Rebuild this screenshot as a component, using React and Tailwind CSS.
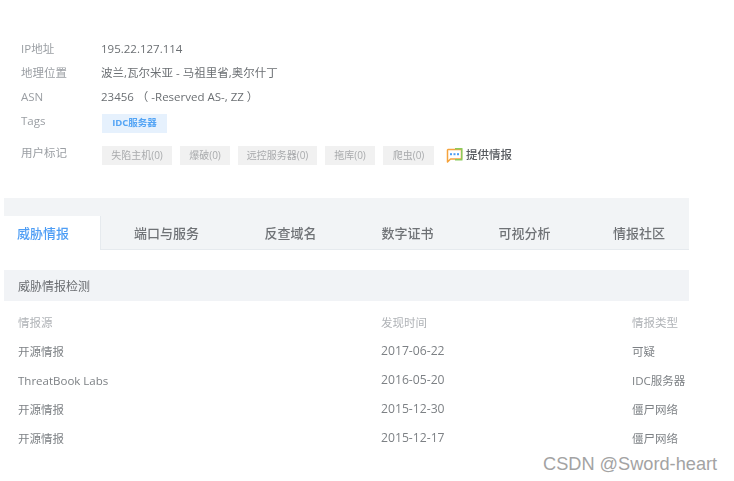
import React from 'react'

const FONT = "font-['Open_Sans','Noto_Sans_CJK_SC',sans-serif]"

const userTags = [
  { label: '失陷主机(0)', width: 'w-[70px]' },
  { label: '爆破(0)', width: 'w-[50px]' },
  { label: '远控服务器(0)', width: 'w-[79px]' },
  { label: '拖库(0)', width: 'w-[50px]' },
  { label: '爬虫(0)', width: 'w-[51px]' },
]

const tabs = [
  { label: '端口与服务', width: 'w-[131px] justify-center' },
  { label: '反查域名', width: 'w-[117px] justify-center' },
  { label: '数字证书', width: 'w-[117px] justify-center' },
  { label: '可视分析', width: 'w-[117px] justify-center' },
  { label: '情报社区', width: 'w-[105px] justify-end pr-[23px]' },
]

const rows = [
  ['开源情报', '2017-06-22', '可疑'],
  ['ThreatBook Labs', '2016-05-20', 'IDC服务器'],
  ['开源情报', '2015-12-30', '僵尸网络'],
  ['开源情报', '2015-12-17', '僵尸网络'],
]

function InfoRow({ label, children, className }) {
  return (
    <div className={`flex items-center ${className}`}>
      <div className="w-[80px] text-[11.5px] text-[#9a9ea3]">{label}</div>
      {children}
    </div>
  )
}

function FeedbackIcon() {
  return (
    <svg width="17" height="17" viewBox="0 0 17 17" fill="none">
      <path d="M2 2.5 H15.5 V12 H4.5 L1.5 15 V3 Z" fill="#fff" stroke="#f5a33c" strokeWidth="1.5" strokeLinejoin="round" />
      <path d="M9 1.75 H15.75 V12.75 H9" stroke="#8ccb5e" strokeWidth="1.5" />
      <rect x="4" y="6.2" width="2" height="2" fill="#4d9df5" />
      <rect x="7.5" y="6.2" width="2" height="2" fill="#4d9df5" />
      <rect x="11" y="6.2" width="2" height="2" fill="#4d9df5" />
    </svg>
  )
}

export default function App() {
  return (
    <div className={`relative h-[481px] w-[734px] overflow-hidden bg-white ${FONT}`}>
      <div className="blur-[0.6px]">
        {/* Summary */}
        <div className="pl-[21px] pt-[38px]">
          <InfoRow label="IP地址" className="h-[21px]">
            <span className="text-[11.5px] text-[#6b6f73]">195.22.127.114</span>
          </InfoRow>
          <InfoRow label="地理位置" className="mt-[2px] h-[24px]">
            <span className="text-[11.5px] text-[#6b6f73]">波兰,瓦尔米亚 - 马祖里省,奥尔什丁</span>
          </InfoRow>
          <InfoRow label="ASN" className="h-[24px]">
            <span className="text-[11.5px] text-[#6b6f73]">23456 （ -Reserved AS-, ZZ ）</span>
          </InfoRow>
          <div className="flex h-[24px] items-center">
            <div className="mb-[1px] w-[81px] text-[11.5px] text-[#9a9ea3]">Tags</div>
            <span className="mt-[4px] flex h-[19px] w-[65px] items-center justify-center bg-[#e6f1fd] text-[9.5px] font-bold text-[#55a5f5]">
              IDC服务器
            </span>
          </div>
          <div className="mt-[12px] flex h-[20px] items-center">
            <div className="mb-[5px] w-[81px] text-[11.5px] text-[#9a9ea3]">用户标记</div>
            <div className="flex items-center gap-[8px]">
              {userTags.map(tag => (
                <span
                  key={tag.label}
                  className={`flex h-[19px] items-center justify-center bg-[#f1f1f1] text-[10px] text-[#a9abad] ${tag.width}`}
                >
                  {tag.label}
                </span>
              ))}
            </div>
            <div className="ml-[12px] flex items-center gap-[3px]">
              <FeedbackIcon />
              <span className="text-[11.5px] font-medium text-[#55595e]">提供情报</span>
            </div>
          </div>
        </div>

        <div className="ml-[4px] w-[685px]">
          {/* Tabs */}
          <div className="mt-[33px] h-[52px] border-b border-[#e6eaee] bg-[#f2f4f6] pt-[18px]">
            <div className="flex h-[34px]">
              <div className="flex h-[34px] w-[97px] items-center border-r border-[#e6eaee] bg-white pl-[13px] pt-[2px] text-[13px] font-medium text-[#4d9df5]">
                威胁情报
              </div>
              {tabs.map(tab => (
                <div
                  key={tab.label}
                  className={`flex items-center pt-[2px] text-[13px] font-medium text-[#6f7276] ${tab.width}`}
                >
                  {tab.label}
                </div>
              ))}
            </div>
          </div>

          {/* Detection table */}
          <div className="mt-[20px] flex h-[31px] items-center bg-[#f1f3f6] pl-[14px] pt-[2px] text-[12px] text-[#6a6d71]">
            威胁情报检测
          </div>
          <div className="mt-[7px] grid grid-cols-[363px_251px_1fr] pl-[14px] text-[11.5px]">
            <div className="flex h-[29px] items-center text-[#b0b3b7]">情报源</div>
            <div className="flex h-[29px] items-center text-[#b0b3b7]">发现时间</div>
            <div className="flex h-[29px] items-center text-[#b0b3b7]">情报类型</div>
            {rows.map(row =>
              row.map((cell, i) => (
                <div
                  key={row[1] + i}
                  className={`flex h-[29px] items-center whitespace-nowrap text-[#7d8185] ${i === 1 ? 'text-[12.2px]' : ''}`}
                >
                  {cell}
                </div>
              ))
            )}
          </div>
        </div>
      </div>

      {/* Watermark */}
      <div className="absolute left-[543px] top-[454px] font-['Liberation_Sans',sans-serif] text-[18.2px] leading-[20px] text-[#a3a3a3]">
        CSDN @Sword-heart
      </div>
    </div>
  )
}
